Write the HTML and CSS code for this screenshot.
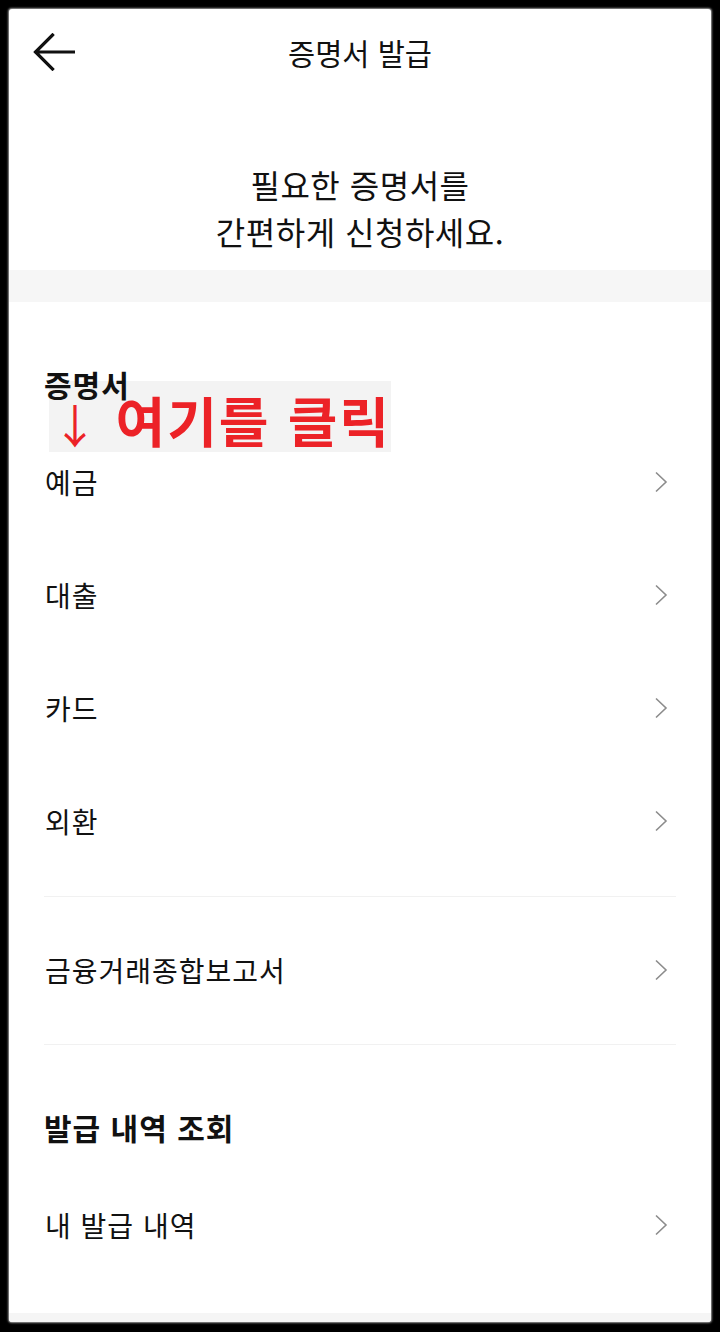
FILE: index.html
```html
<!DOCTYPE html>
<html lang="ko">
<head>
<meta charset="utf-8">
<title>증명서 발급</title>
<link rel="stylesheet" href="styles.css">
</head>
<body>
<div class="frame">
  <header class="topbar">
    <button class="back" aria-label="뒤로">
      <svg width="42" height="38" viewBox="0 0 42 38"><path d="M41 19 H3 M19.5 2 L2.5 19 L19.5 36" fill="none" stroke="#111" stroke-width="3.2" stroke-linecap="square" stroke-linejoin="miter"/></svg>
    </button>
    <h1 class="title">증명서 발급</h1>
    <span></span>
  </header>

  <p class="intro">필요한 증명서를<br>간편하게 신청하세요.</p>

  <div class="band"></div>

  <section class="section">
    <h2 class="section-title">증명서</h2>
    <ul class="list">
      <li class="row"><span>예금</span><svg class="chev" width="14" height="24" viewBox="0 0 14 24"><path d="M2 2.5 L12 12 L2 21.5" fill="none" stroke="#8c8c8c" stroke-width="1.6"/></svg></li>
      <li class="row"><span>대출</span><svg class="chev" width="14" height="24" viewBox="0 0 14 24"><path d="M2 2.5 L12 12 L2 21.5" fill="none" stroke="#8c8c8c" stroke-width="1.6"/></svg></li>
      <li class="row"><span>카드</span><svg class="chev" width="14" height="24" viewBox="0 0 14 24"><path d="M2 2.5 L12 12 L2 21.5" fill="none" stroke="#8c8c8c" stroke-width="1.6"/></svg></li>
      <li class="row"><span>외환</span><svg class="chev" width="14" height="24" viewBox="0 0 14 24"><path d="M2 2.5 L12 12 L2 21.5" fill="none" stroke="#8c8c8c" stroke-width="1.6"/></svg></li>
    </ul>
    <div class="divider"></div>
    <ul class="list single">
      <li class="row"><span>금융거래종합보고서</span><svg class="chev" width="14" height="24" viewBox="0 0 14 24"><path d="M2 2.5 L12 12 L2 21.5" fill="none" stroke="#8c8c8c" stroke-width="1.6"/></svg></li>
    </ul>
    <div class="divider"></div>
    <div class="annot"><span class="annot-arrow">↓</span><span class="annot-text">여기를 클릭</span></div>
  </section>

  <section class="section">
    <h2 class="section-title">발급 내역 조회</h2>
    <ul class="list">
      <li class="row"><span>내 발급 내역</span><svg class="chev" width="14" height="24" viewBox="0 0 14 24"><path d="M2 2.5 L12 12 L2 21.5" fill="none" stroke="#8c8c8c" stroke-width="1.6"/></svg></li>
    </ul>
  </section>

  <div class="bottom"></div>
</div>
</body>
</html>
```

FILE: styles.css
```css
* { box-sizing: border-box; }
html, body { margin: 0; padding: 0; }
body {
  background: #000;
  width: 720px;
  height: 1332px;
  overflow: hidden;
  font-family: "Noto Sans CJK KR", "Noto Sans", sans-serif;
  color: #111;
}
.frame {
  position: relative;
  margin: 9px 9px 0 9px;
  width: 702px;
  height: 1313px;
  background: #fff;
  border-radius: 3px;
  box-shadow: 0 0 2px 1px #9a9a9a;
  display: flex;
  flex-direction: column;
  overflow: hidden;
}
.topbar {
  height: 86px;
  display: grid;
  grid-template-columns: 1fr auto 1fr;
  align-items: center;
}
.back {
  background: none;
  border: 0;
  padding: 0;
  margin-left: 24px;
  width: 42px;
  height: 38px;
  display: flex;
}
.title {
  margin: 0;
  font-size: 29.5px;
  font-weight: 400;
  line-height: 40px;
}
.intro {
  margin: 0;
  padding: 66px 0 15px;
  text-align: center;
  font-size: 32px;
  letter-spacing: 0.5px;
  line-height: 47px;
}
.band {
  height: 32px;
  background: #f6f6f6;
}
.section {
  position: relative;
  padding-top: 62px;
}
.section-title {
  position: relative;
  z-index: 2;
  margin: 0;
  padding: 0 35px;
  font-size: 30px;
  letter-spacing: 1px;
  font-weight: 700;
  line-height: 40px;
}
.list {
  list-style: none;
  margin: 21px 0 19px;
  padding: 0;
}
.list.single { margin: 16px 0 18px; }
.row {
  height: 113px;
  display: flex;
  align-items: center;
  justify-content: space-between;
  padding: 0 43px 0 36px;
  font-size: 28px;
  letter-spacing: 1px;
  line-height: 40px;
}
.chev { display: block; }
.divider {
  height: 1px;
  margin: 0 35px;
  background: #f1f1f1;
}
.annot {
  position: absolute;
  left: 40px;
  top: 79px;
  width: 342px;
  height: 71px;
  padding-top: 7px;
  background: #f3f3f3;
  display: flex;
  align-items: center;
  color: #ec2227;
  font-weight: 700;
  z-index: 1;
}
.annot-arrow {
  font-size: 46px;
  line-height: 1;
  margin-left: 3px;
  padding-top: 6px;
  width: 70px;
  font-weight: 400;
}
.annot-text {
  font-size: 54px;
  line-height: 1;
  letter-spacing: 2px;
  white-space: nowrap;
}
.bottom {
  margin-top: auto;
  height: 9px;
  background: #f5f5f5;
}
```
